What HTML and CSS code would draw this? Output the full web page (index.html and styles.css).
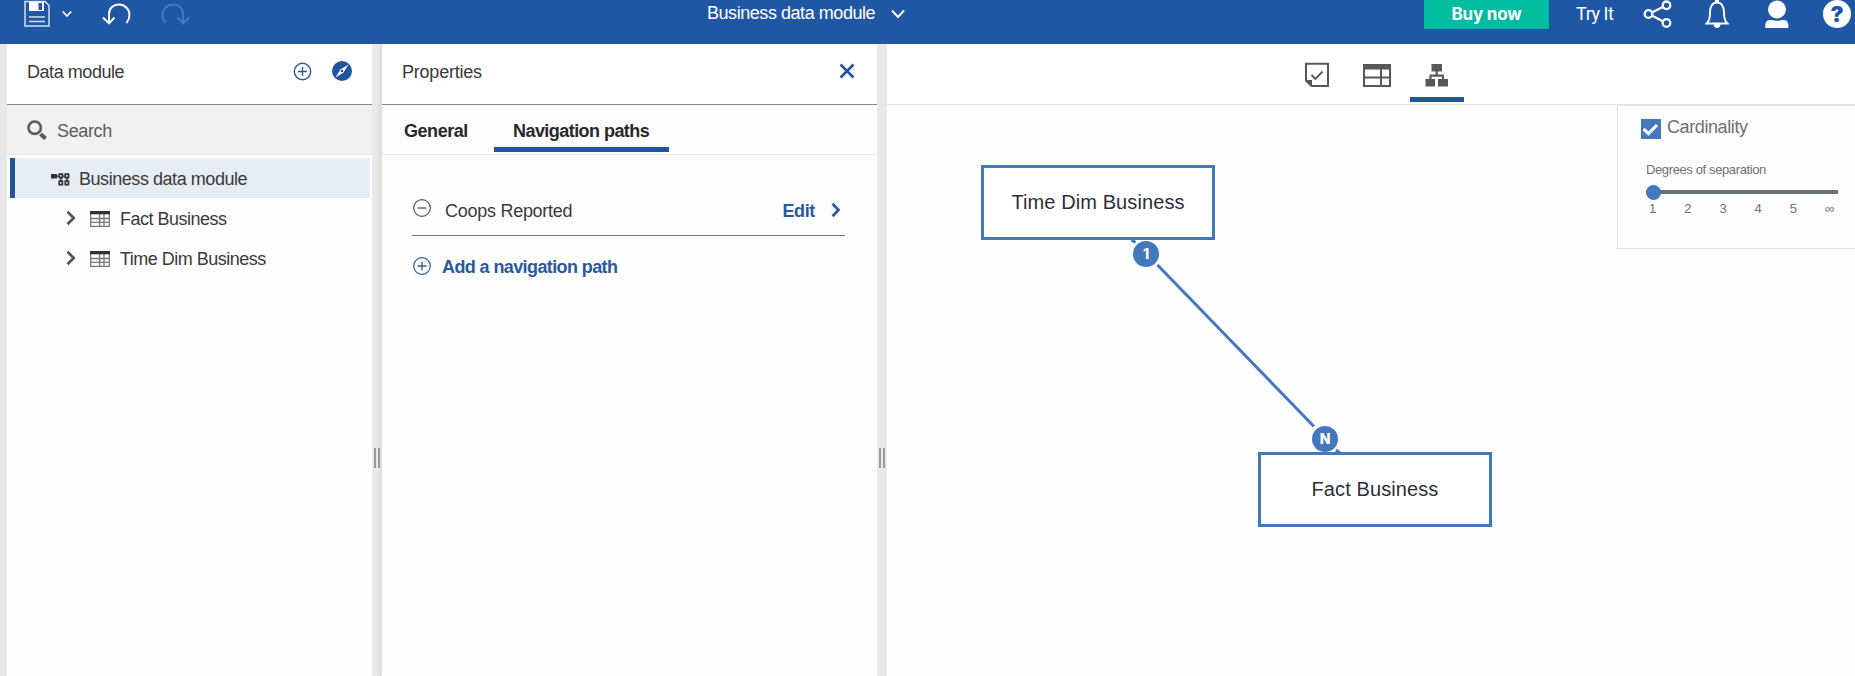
FILE: index.html
```html
<!DOCTYPE html>
<html lang="en">
<head>
<meta charset="utf-8">
<title>Business data module</title>
<link rel="stylesheet" href="styles.css">
</head>
<body>
<header class="topbar">
  <div class="tools">
    <svg class="save" width="26" height="27" viewBox="0 0 26 27"><path d="M1 1.500H21L25 5.500V26H1Z" fill="none" stroke="#d5e1f5" stroke-width="1.500"/><path d="M5 2H20V11H5Z" fill="#fff"/><path d="M14.500 3h3.500v7h-3.500z" fill="#1f57a4"/><path d="M5 17H21M5 21.500H21" stroke="#d5e1f5" stroke-width="1.300"/></svg>
    <svg class="save-caret" width="10" height="8" viewBox="0 0 10 8"><path d="M.8 1.500 5 6 9.200 1.500" fill="none" stroke="#fff" stroke-width="1.800"/></svg>
    <svg class="undo" width="29" height="22" viewBox="0 0 29 22"><path d="M7 20V11C7 5 11.500 1.500 17 1.500S27.500 6 27.500 11.500C27.500 15 26.500 17.500 24.500 20M1 14.500 7 20.500 12.500 14.500" fill="none" stroke="#fff" stroke-width="1.900"/></svg>
    <svg class="redo" width="29" height="22" viewBox="0 0 29 22"><path d="M22 20V11C22 5 17.500 1.500 12 1.500S1.500 6 1.500 11.500C1.500 15 2.500 17.500 4.500 20M28 14.500 22 20.500 16.500 14.500" fill="none" stroke="#4577bf" stroke-width="1.900"/></svg>
  </div>
  <div class="title"><span>Business data module</span>
    <svg width="14" height="10" viewBox="0 0 14 10"><path d="M1 1.500 7 8 13 1.500" fill="none" stroke="#fff" stroke-width="2.100"/></svg>
  </div>
  <div class="account">
    <button class="buy">Buy now</button>
    <span class="try">Try It</span>
    <svg class="share" width="30" height="30" viewBox="0 0 30 30" fill="none" stroke="#fff" stroke-width="2.300"><circle cx="5.500" cy="15" r="3.800"/><circle cx="23.500" cy="6.300" r="3.800"/><circle cx="23.500" cy="24" r="3.800"/><path d="M9.200 13.200 19.900 8M9.200 16.800 19.900 22.200"/></svg>
    <svg class="bell" width="24" height="30" viewBox="0 0 24 30"><path d="M1.500 24.500C4 22.500 5 20 5 14C5 7.500 7 3.500 12 3.500S19 7.500 19 14C19 20 20 22.500 22.500 24.500Z" fill="none" stroke="#fff" stroke-width="1.900"/><path d="M10 1h4v2.500h-4zM8.500 25h7c0 2.500-1.500 4-3.500 4s-3.500-1.500-3.500-4z" fill="#fff"/></svg>
    <svg class="person" width="24" height="29" viewBox="0 0 24 29" fill="#fff"><circle cx="12" cy="9.500" r="9"/><path d="M.3 28V25C.3 21.500 2.500 19.700 6 20Q12 21.500 17.500 20C21.500 19.700 23.300 21.500 23.300 25V28Z"/></svg>
    <span class="help">?</span>
  </div>
</header>
<main class="workspace">
  <aside class="modules">
    <div class="panel-head"><h2>Data module</h2>
      <svg class="add" width="19" height="19" viewBox="0 0 19 19"><path d="M9.500 5V14M5 9.500H14" stroke="#2b589f" stroke-width="1.400"/><circle cx="9.500" cy="9.500" r="8.200" fill="none" stroke="#2b589f" stroke-width="1.400"/></svg>
      <svg class="compass" width="20" height="20" viewBox="0 0 20 20"><circle cx="10" cy="10" r="10" fill="#2155a0"/><path d="M16.500 3.500 11.500 11.500 3.500 16.500 8.500 8.500Z" fill="#fff"/><circle cx="10" cy="10" r="1.200" fill="#2155a0"/></svg>
    </div>
    <div class="search">
      <svg width="20" height="20" viewBox="0 0 20 20"><circle cx="7.700" cy="7.700" r="6.200" fill="none" stroke="#5a5a5a" stroke-width="2.600"/><path d="M13.500 14 18.500 18.500" stroke="#5a5a5a" stroke-width="4.200"/></svg>
      <span>Search</span>
    </div>
    <ul class="tree">
      <li class="selected">
        <svg width="19" height="13" viewBox="0 0 19 13"><path d="M0 1h6v4.500H0zM5 2.500H18v1.300H5zM9.100 5h1.500v5H9.100zM15.200 5h1.500v5h-1.500z" fill="#333"/><path d="M8.200 1.200h3.200v3.500H8.200zM14.300 1.200h3.200v3.500h-3.200zM8.200 8.200h3.200v3.500H8.200zM14.300 8.200h3.200v3.500h-3.200z" fill="#e6edf5" stroke="#333" stroke-width="1.700"/></svg>
        <span>Business data module</span></li>
      <li><svg class="chev" width="10" height="16" viewBox="0 0 10 16"><path d="M1.500 1.800 7.700 8 1.500 14.200" fill="none" stroke="#555" stroke-width="2.700"/></svg>
        <svg class="table" width="20" height="16" viewBox="0 0 20 16"><path d="M.7.500H19.300V15.300H.7ZM1 7.500H19M1 11.300H19M9.700 2V15M14 2V15" fill="none" stroke="#777" stroke-width="1.300"/><path d="M0 0h20v3.300H0z" fill="#333"/></svg>
        <span class="fact">Fact Business</span></li>
      <li><svg class="chev" width="10" height="16" viewBox="0 0 10 16"><path d="M1.500 1.800 7.700 8 1.500 14.200" fill="none" stroke="#555" stroke-width="2.700"/></svg>
        <svg class="table" width="20" height="16" viewBox="0 0 20 16"><path d="M.7.500H19.300V15.300H.7ZM1 7.500H19M1 11.300H19M9.700 2V15M14 2V15" fill="none" stroke="#777" stroke-width="1.300"/><path d="M0 0h20v3.300H0z" fill="#333"/></svg>
        <span class="time">Time Dim Business</span></li>
    </ul>
  </aside>
  <div class="splitter shaded"><i></i></div>
  <section class="properties">
    <div class="panel-head"><h2>Properties</h2>
      <svg width="16" height="16" viewBox="0 0 16 16"><path d="M1.500 1.500 14.500 14.500M14.500 1.500 1.500 14.500" stroke="#2155a0" stroke-width="2.600"/></svg>
    </div>
    <nav class="tabs"><span class="general">General</span><span class="active">Navigation paths</span></nav>
    <div class="paths">
      <div class="path-row">
        <svg width="18" height="18" viewBox="0 0 18 18"><circle cx="9" cy="9" r="8.300" fill="none" stroke="#555" stroke-width="1.200"/><path d="M4.500 9H13.500" stroke="#555" stroke-width="1.300"/></svg>
        <span class="name">Coops Reported</span><span class="edit">Edit</span>
        <svg class="edit-chev" width="10" height="16" viewBox="0 0 10 16"><path d="M1.500 1.800 7.500 8 1.500 14.200" fill="none" stroke="#2b589f" stroke-width="2.700"/></svg>
      </div>
      <div class="add-row">
        <svg width="18" height="18" viewBox="0 0 18 18"><circle cx="9" cy="9" r="8.300" fill="none" stroke="#2b589f" stroke-width="1.200"/><path d="M4.500 9H13.500M9 4.500V13.500" stroke="#2b589f" stroke-width="1.300"/></svg>
        <span>Add a navigation path</span>
      </div>
    </div>
  </section>
  <div class="splitter"><i></i></div>
  <section class="diagram">
    <div class="views">
      <span class="view"><svg width="26" height="26" viewBox="0 0 26 26"><path d="M2 1.800H24V24H7.500L2 18.500Z" fill="none" stroke="#585858" stroke-width="2"/><path d="M1 18h7v7z" fill="#585858"/><path d="M7.500 13 11.500 17 18.500 9.500" fill="none" stroke="#585858" stroke-width="1.900"/></svg></span>
      <span class="view"><svg width="28" height="23" viewBox="0 0 28 23"><path d="M1 1H27V22H1ZM1 13.500H27M18 5V22" fill="none" stroke="#585858" stroke-width="2"/><path d="M0 0h28v5.500H0z" fill="#585858"/></svg></span>
      <span class="view current"><svg width="24" height="23" viewBox="0 0 24 23"><path d="M6.500 0h10.500v7.500h-10.500zM.500 15H10V22.500H.500zM13 15H23V22.500H13z" fill="#585858"/><path d="M11.700 7V12M5.500 16V11.700H18V16" fill="none" stroke="#585858" stroke-width="2.200"/></svg></span>
    </div>
    <div class="canvas">
      <svg class="link" width="968" height="571" viewBox="887 105 968 571"><path d="M1157.500 265 1314 426.500M1131.500 240 1135.500 242.500M1336 450 1341 454" stroke="#4178be" stroke-width="3"/></svg>
      <div class="node n-time">Time Dim Business</div>
      <div class="node n-fact">Fact Business</div>
      <b class="pin p-one">1</b>
      <b class="pin p-many">N</b>
      <div class="options">
        <label class="card"><svg width="20" height="20" viewBox="0 0 20 20"><path d="M0 0h20v20H0z" fill="#4178be"/><path d="M2.500 10 7.500 14.500 16 6" fill="none" stroke="#fff" stroke-width="3.100"/></svg><span>Cardinality</span></label>
        <p>Degrees of separation</p>
        <div class="slider"><i></i></div>
        <div class="ticks"><span>1</span><span>2</span><span>3</span><span>4</span><span>5</span><span>∞</span></div>
      </div>
    </div>
  </section>
</main>
</body>
</html>
```
FILE: styles.css
```css
* { box-sizing: border-box; margin: 0; padding: 0; }
html, body { height: 676px; overflow: hidden; }
body { font: 18px/24px "Liberation Sans", Arial, sans-serif; color: #3a3a3a; background: #fefefe; white-space: nowrap; }
svg { display: block; flex: none; }
ul { list-style: none; }

.topbar { height: 44px; background: #1f57a4; color: #fff; display: flex; align-items: flex-start; }
.tools { display: flex; width: 707px; padding-left: 24px; }
.save-caret { margin: 10px 0 0 12px; }
.undo { margin: 3px 0 0 30px; }
.redo { margin: 3px 0 0 30px; }
.title { display: flex; width: 716px; padding-top: 1px; letter-spacing: -.45px; }
.title svg { margin: 8px 0 0 16px; }
.account { display: flex; margin-left: 1px; }
.buy { width: 125px; height: 29px; border: 0; background: #00bda0; color: #fff; font: bold 17px/27px Inter, sans-serif; letter-spacing: -.2px; }
.try { font: 18px/26px Roboto, sans-serif; letter-spacing: -.45px; width: 38px; margin-left: 27px; padding-top: 1px; }
.share { margin: -1px 0 0 29px; }
.bell { margin: -1px 0 0 32px; }
.person { margin: 0 0 0 36px; }
.help { width: 28px; height: 28px; border-radius: 50%; background: #fff; color: #1f57a4; font: 900 22px/28px Inter, sans-serif; text-align: center; margin-left: 34px; }

.workspace { display: flex; height: 632px; }
.modules { width: 372px; border-left: 7px solid #e8e8e8; }
.panel-head { display: flex; height: 61px; border-bottom: 1px solid #85888b; padding: 16px 0 0 20px; background: #fff; }
.panel-head h2 { font-size: 18px; font-weight: 400; flex: 1; }
.modules h2 { letter-spacing: -.45px; }
.modules .panel-head { padding-right: 20px; }
.add { margin: 2px 20px 0 0; }
.compass { margin-top: 1px; }
.search { display: flex; height: 50px; background: #f1f1f1; border-bottom: 1px solid #e6e6e6; padding: 14px 0 0 20px; color: #5c5c5c; letter-spacing: -.35px; }
.search svg { margin-top: 1px; }
.search span { margin-left: 10px; }
.tree { padding: 3px 2px 0 3px; }
.tree li { height: 40px; display: flex; align-items: center; }
.tree .selected { background: #e6edf5; border-left: 5px solid #2155a0; padding-left: 36px; letter-spacing: -.45px; padding-top: 2px; }
.selected span { margin-left: 9px; }
.chev { margin-left: 56px; }
.table { margin-left: 14px; margin-top: 2px; }
.fact, .time { margin: 2px 0 0 10px; letter-spacing: -.5px; }

.splitter { width: 10px; background: #e9e9e9; display: flex; justify-content: center; padding-top: 404px; }
.shaded { background: linear-gradient(90deg, #e9e9e9 50%, #dcdcdc); }
.splitter i { width: 6px; height: 20px; border: solid #999; border-width: 0 2px; }

.properties { width: 495px; }
.properties h2 { letter-spacing: -.22px; }
.properties .panel-head { padding-right: 22px; }
.properties .panel-head svg { margin-top: 3px; }
.tabs { display: flex; height: 50px; margin-right: 2px; border-bottom: 1px solid #e5e5e5; font-weight: bold; color: #292929; }
.tabs span { height: 47px; padding-top: 14px; }
.general { width: 112px; padding-left: 22px; letter-spacing: -.45px; }
.active { width: 175px; padding-left: 19px; border-bottom: 5px solid #2155a0; letter-spacing: -.55px; }
.paths { padding: 36px 32px 0 30px; }
.path-row { display: flex; height: 45px; border-bottom: 1px solid #77797c; padding: 8px 4px 0 1px; }
.name { margin: 0 auto 0 14px; letter-spacing: -.27px; }
.edit { font-weight: bold; color: #2b589f; letter-spacing: -.35px; }
.edit-chev { margin: 3px 0 0 16px; }
.add-row { display: flex; padding: 19px 0 0 1px; color: #2b589f; font-weight: bold; letter-spacing: -.6px; }
.add-row svg { margin-top: 2px; }
.add-row span { margin-left: 11px; }

.diagram { width: 968px; }
.views { height: 61px; border-bottom: 1px solid #e2e2e2; display: flex; justify-content: center; gap: 6px; padding-left: 12px; background: #fff; }
.view { width: 54px; height: 58px; padding-top: 20px; display: flex; justify-content: center; align-items: flex-start; }
.view:first-child { padding-top: 18px; }
.current { border-bottom: 5px solid #2155a0; }
.canvas { position: relative; height: 571px; }
.link { position: absolute; left: 0; top: 0; }
.node { position: absolute; width: 234px; height: 75px; border: 3px solid #4178be; background: #fff; color: #2a2f3a; font-size: 20px; line-height: 69px; letter-spacing: .1px; text-align: center; }
.n-time { left: 94px; top: 60px; }
.n-fact { left: 371px; top: 347px; }
.pin { position: absolute; width: 26px; height: 26px; border-radius: 50%; background: #4178be; color: #fff; font: 800 14px/26px Inter, sans-serif; text-align: center; }
.p-one { left: 246px; top: 135.500px; }
.p-many { left: 425px; top: 320.500px; }
.options { position: absolute; left: 730px; top: -1px; width: 238px; height: 145px; border: 1px solid #e3e3e3; border-width: 2px 0 1px 1px; color: #6d7074; padding: 12px 0 0 23px; background: #fefefe; }
.card { display: flex; letter-spacing: -.4px; }
.card svg { margin-top: 1px; }
.card span { margin: -3px 0 0 6px; }
.options p { font-size: 13px; line-height: 16px; letter-spacing: -.38px; margin: 23px 0 0 5px; }
.slider { width: 192px; height: 16px; margin: 7px 0 0 5px; background: linear-gradient(#697373, #697373) 0 5px / 100% 4px no-repeat; }
.slider i { display: block; width: 15px; height: 15px; border-radius: 50%; background: #4178be; }
.ticks { display: flex; font-size: 13px; line-height: 16px; margin: 0 0 0 8px; }
.ticks span { flex: none; width: 35.200px; }
```
